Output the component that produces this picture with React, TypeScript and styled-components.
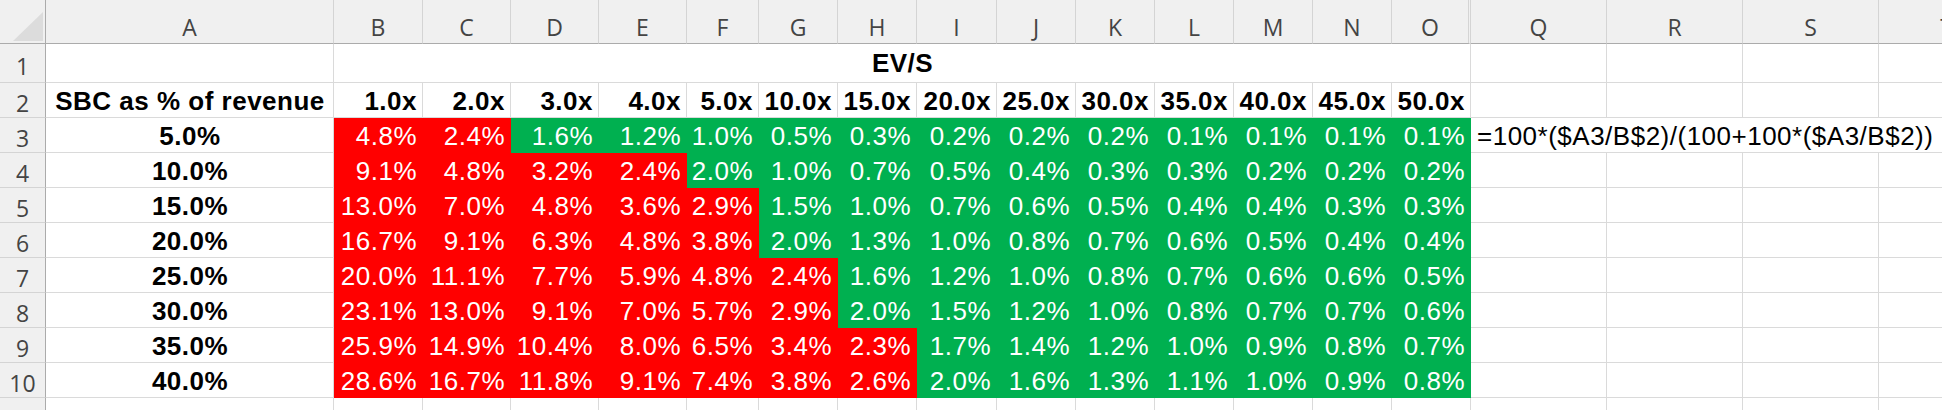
import React from 'react';
import styled, { createGlobalStyle } from 'styled-components';

const GlobalStyle = createGlobalStyle`
    html, body {
        margin: 0;
        padding: 0;
        background: #ffffff;
        overflow: hidden;
    }
`;

const RED = '#ff0000';
const GREEN = '#00b050';
const GRID = '#dadada';
const HEAD_BG = '#f0f0f0';
const HEAD_EDGE = '#ababab';
const HEAD_SEP = '#d4d4d4';

const colWidths: number[] = [46, 288, 89, 88, 88, 88, 72, 79, 79, 80, 79, 79, 79, 79, 79, 79, 136, 136, 136, 136];
const colLetters: string[] = ['A', 'B', 'C', 'D', 'E', 'F', 'G', 'H', 'I', 'J', 'K', 'L', 'M', 'N', 'O', 'Q', 'R', 'S', 'T'];
const multiples: string[] = ['1.0x', '2.0x', '3.0x', '4.0x', '5.0x', '10.0x', '15.0x', '20.0x', '25.0x', '30.0x', '35.0x', '40.0x', '45.0x', '50.0x'];

const rows: { sbc: string; values: string[] }[] = [
    { sbc: '5.0%', values: ['4.8', '2.4', '1.6', '1.2', '1.0', '0.5', '0.3', '0.2', '0.2', '0.2', '0.1', '0.1', '0.1', '0.1'] },
    { sbc: '10.0%', values: ['9.1', '4.8', '3.2', '2.4', '2.0', '1.0', '0.7', '0.5', '0.4', '0.3', '0.3', '0.2', '0.2', '0.2'] },
    { sbc: '15.0%', values: ['13.0', '7.0', '4.8', '3.6', '2.9', '1.5', '1.0', '0.7', '0.6', '0.5', '0.4', '0.4', '0.3', '0.3'] },
    { sbc: '20.0%', values: ['16.7', '9.1', '6.3', '4.8', '3.8', '2.0', '1.3', '1.0', '0.8', '0.7', '0.6', '0.5', '0.4', '0.4'] },
    { sbc: '25.0%', values: ['20.0', '11.1', '7.7', '5.9', '4.8', '2.4', '1.6', '1.2', '1.0', '0.8', '0.7', '0.6', '0.6', '0.5'] },
    { sbc: '30.0%', values: ['23.1', '13.0', '9.1', '7.0', '5.7', '2.9', '2.0', '1.5', '1.2', '1.0', '0.8', '0.7', '0.7', '0.6'] },
    { sbc: '35.0%', values: ['25.9', '14.9', '10.4', '8.0', '6.5', '3.4', '2.3', '1.7', '1.4', '1.2', '1.0', '0.9', '0.8', '0.7'] },
    { sbc: '40.0%', values: ['28.6', '16.7', '11.8', '9.1', '7.4', '3.8', '2.6', '2.0', '1.6', '1.3', '1.1', '1.0', '0.9', '0.8'] },
];

const Sheet = styled.div`
    display: grid;
    grid-template-columns: ${colWidths.map((w) => `${w}px`).join(' ')};
    grid-template-rows: 44px 39px 35px repeat(8, 35px) 35px;
    width: 2015px;
    background: #ffffff;
`;

const Corner = styled.div`
    box-sizing: border-box;
    display: flex;
    align-items: flex-end;
    justify-content: flex-end;
    padding: 0 2px 2px 0;
    background: ${HEAD_BG};
    border-right: 1px solid ${HEAD_EDGE};
    border-bottom: 1px solid ${HEAD_EDGE};
`;

const CornerTriangle = styled.div`
    width: 30px;
    height: 29px;
    background: #dcdcdc;
    clip-path: polygon(100% 0, 100% 100%, 0 100%);
`;

const HeaderText = styled.div`
    box-sizing: border-box;
    display: flex;
    justify-content: center;
    background: ${HEAD_BG};
    color: #444444;
    font-family: "Open Sans", "Noto Sans", sans-serif;
    font-size: 23px;
    white-space: nowrap;
    overflow: hidden;
`;

const ColHead = styled(HeaderText)<{ $hiddenAfter?: boolean }>`
    align-items: flex-end;
    border-right: ${(p) => (p.$hiddenAfter ? `3px double ${HEAD_SEP}` : `1px solid ${HEAD_SEP}`)};
    border-bottom: 1px solid ${HEAD_EDGE};
`;

const RowHead = styled(HeaderText)`
    align-items: center;
    padding-top: 6px;
    border-right: 1px solid ${HEAD_EDGE};
    border-bottom: 1px solid ${HEAD_SEP};
`;

type Align = 'left' | 'center' | 'right';

const Cell = styled.div<{ $align?: Align; $bold?: boolean; $fill?: string; $span?: number; $middle?: boolean }>`
    box-sizing: border-box;
    grid-column: span ${(p) => p.$span ?? 1};
    display: flex;
    align-items: ${(p) => (p.$middle ? 'center' : 'flex-end')};
    justify-content: ${(p) => (p.$align === 'center' ? 'center' : p.$align === 'left' ? 'flex-start' : 'flex-end')};
    padding: 0 5px 0 6px;
    background: ${(p) => p.$fill ?? '#ffffff'};
    border-right: 1px solid ${(p) => p.$fill ?? GRID};
    border-bottom: 1px solid ${(p) => p.$fill ?? GRID};
    color: ${(p) => (p.$fill ? '#ffffff' : '#000000')};
    font-family: "Liberation Sans", Arial, sans-serif;
    font-size: 26px;
    letter-spacing: 0.5px;
    font-weight: ${(p) => (p.$bold ? 700 : 400)};
    white-space: nowrap;
`;

const EmptyCells: React.FC<{ count: number }> = ({ count }) => (
    <>
        {Array.from({ length: count }, (_, i) => (
            <Cell key={i} />
        ))}
    </>
);

const App: React.FC = () => {
    return (
        <>
            <GlobalStyle />
            <Sheet>
                <Corner>
                    <CornerTriangle />
                </Corner>
                {colLetters.map((letter) => (
                    <ColHead key={letter} $hiddenAfter={letter === 'O'}>
                        {letter}
                    </ColHead>
                ))}

                <RowHead>1</RowHead>
                <Cell />
                <Cell $span={14} $align="center" $bold $middle>
                    EV/S
                </Cell>
                <EmptyCells count={4} />

                <RowHead>2</RowHead>
                <Cell $align="center" $bold>
                    SBC as % of revenue
                </Cell>
                {multiples.map((m) => (
                    <Cell key={m} $bold>
                        {m}
                    </Cell>
                ))}
                <EmptyCells count={4} />

                {rows.map((row, r) => (
                    <React.Fragment key={row.sbc}>
                        <RowHead>{r + 3}</RowHead>
                        <Cell $align="center" $bold>
                            {row.sbc}
                        </Cell>
                        {row.values.map((v, i) => (
                            <Cell key={i} $fill={parseFloat(v) > 2.0 ? RED : GREEN}>
                                {v}%
                            </Cell>
                        ))}
                        {r === 0 ? (
                            <Cell $span={4} $align="left">
                                =100*($A3/B$2)/(100+100*($A3/B$2))
                            </Cell>
                        ) : (
                            <EmptyCells count={4} />
                        )}
                    </React.Fragment>
                ))}

                <RowHead>11</RowHead>
                <EmptyCells count={19} />
            </Sheet>
        </>
    );
};

export default App;
